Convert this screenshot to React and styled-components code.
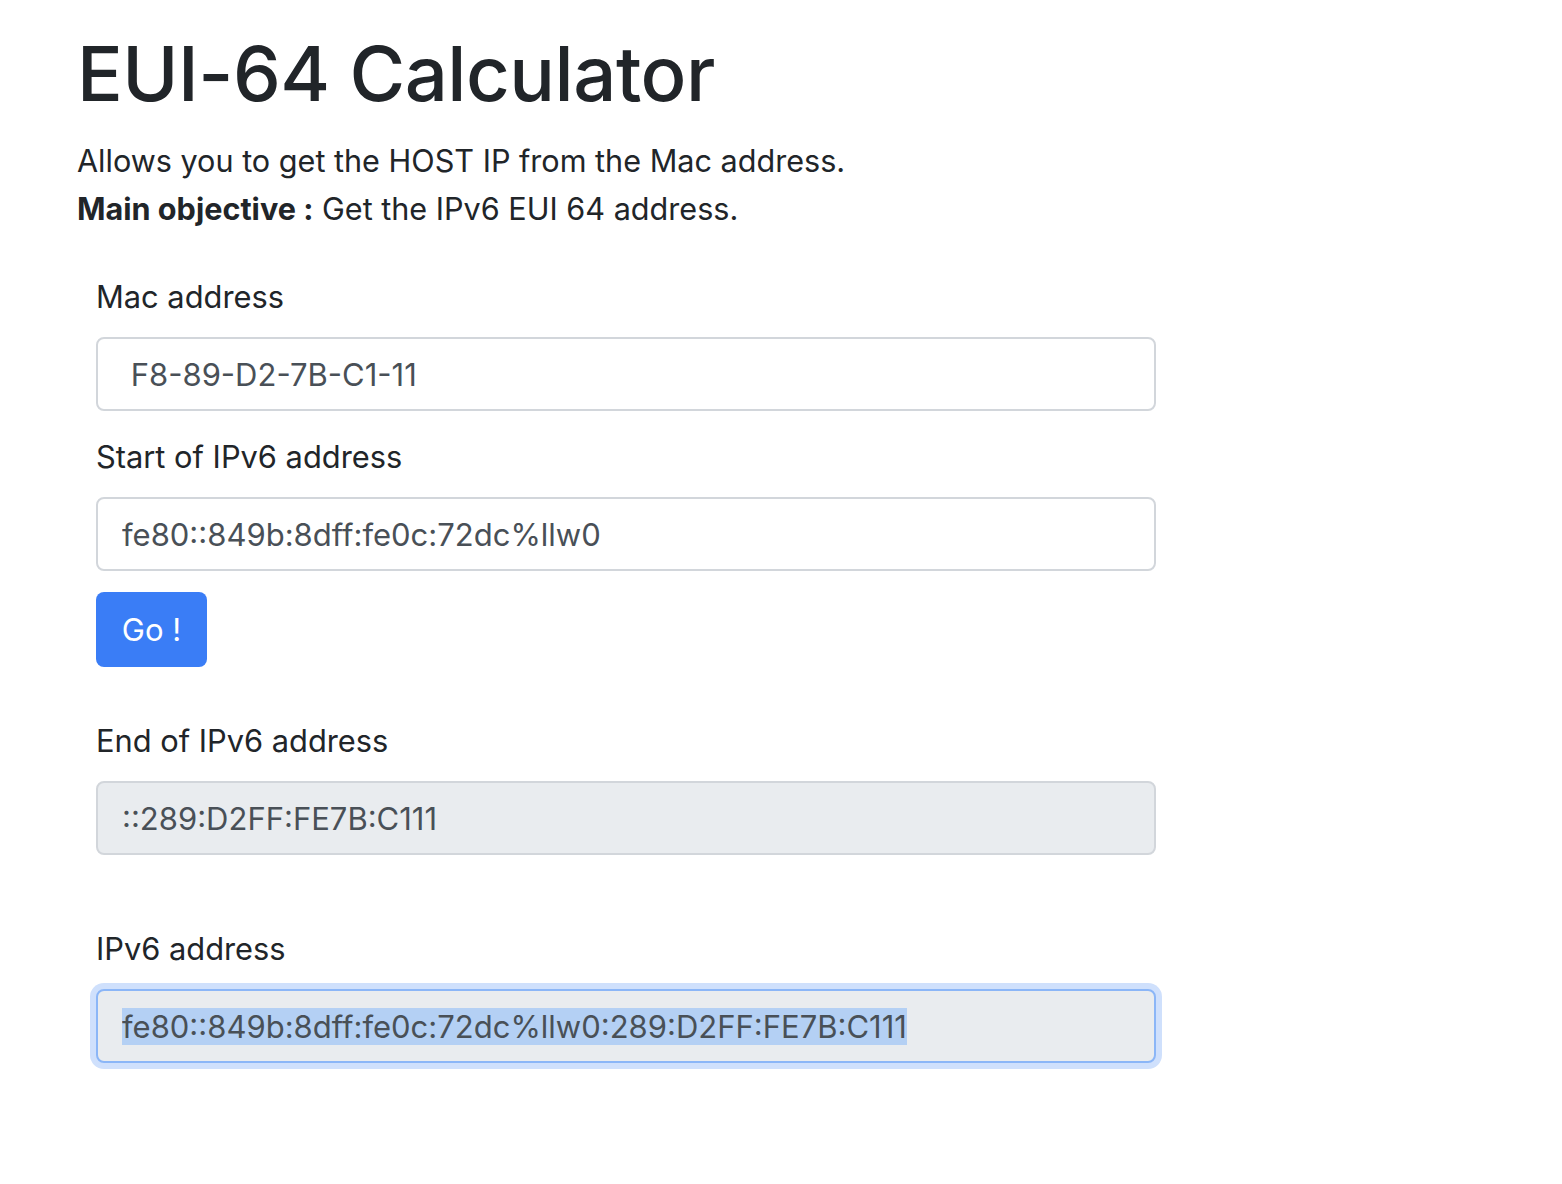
import React from "react";
import styled, { createGlobalStyle } from "styled-components";

const GlobalStyle = createGlobalStyle`
  body {
    margin: 0;
    background: #fff;
    font-family: Inter, "Noto Sans", "Liberation Sans", sans-serif;
    color: #212529;
  }
  input::selection {
    background: #b4d0f4;
  }
`;

const Page = styled.div`
  padding: 25px 0 80px 77px;
  width: 1080px;
`;

const Title = styled.h1`
  margin: 0 0 16px;
  font-size: 76px;
  font-weight: 500;
  line-height: 96px;
  letter-spacing: -0.5px;
`;

const Intro = styled.p`
  margin: 0;
  font-size: 30.6px;
  line-height: 48px;

  strong {
    font-weight: 700;
  }
`;

const Form = styled.form`
  margin-top: 40px;
  padding-left: 19px;
  width: 1060px;
`;

const Label = styled.label`
  display: block;
  font-size: 30.8px;
  line-height: 48px;
  margin: ${p => p.$top || 0}px 0 16px;
`;

const Field = styled.input`
  display: block;
  box-sizing: border-box;
  width: 100%;
  height: 74px;
  padding: 0 24px;
  font-family: inherit;
  font-size: 31px;
  color: #495057;
  background: ${p => (p.readOnly ? "#e9ecef" : "#fff")};
  border: 2px solid ${p => (p.$focus ? "#8bb6f7" : "#d2d6db")};
  border-radius: 8px;
  outline: none;
  box-shadow: ${p => (p.$focus ? "0 0 0 6px #cfe0fc" : "none")};
`;

const GoButton = styled.button`
  display: block;
  margin-top: 21px;
  width: 111px;
  height: 75px;
  border: none;
  border-radius: 8px;
  background: #3a7df6;
  color: #fff;
  font-family: inherit;
  font-size: 31px;
  cursor: pointer;
`;

export default function App() {
  const last = React.useRef(null);

  React.useEffect(() => {
    const el = last.current;
    if (el) {
      el.focus();
      el.setSelectionRange(0, el.value.length);
    }
  }, []);

  return (
    <Page>
      <GlobalStyle />
      <Title>EUI-64 Calculator</Title>
      <Intro>Allows you to get the HOST IP from the Mac address.</Intro>
      <Intro>
        <strong>Main objective :</strong> Get the IPv6 EUI 64 address.
      </Intro>
      <Form onSubmit={e => e.preventDefault()}>
        <Label>Mac address</Label>
        <Field defaultValue=" F8-89-D2-7B-C1-11" />
        <Label $top={22}>Start of IPv6 address</Label>
        <Field defaultValue="fe80::849b:8dff:fe0c:72dc%llw0" />
        <GoButton type="button">Go !</GoButton>
        <Label $top={50}>End of IPv6 address</Label>
        <Field readOnly value="::289:D2FF:FE7B:C111" />
        <Label $top={70}>IPv6 address</Label>
        <Field
          ref={last}
          readOnly
          $focus
          value="fe80::849b:8dff:fe0c:72dc%llw0:289:D2FF:FE7B:C111"
        />
      </Form>
    </Page>
  );
}
